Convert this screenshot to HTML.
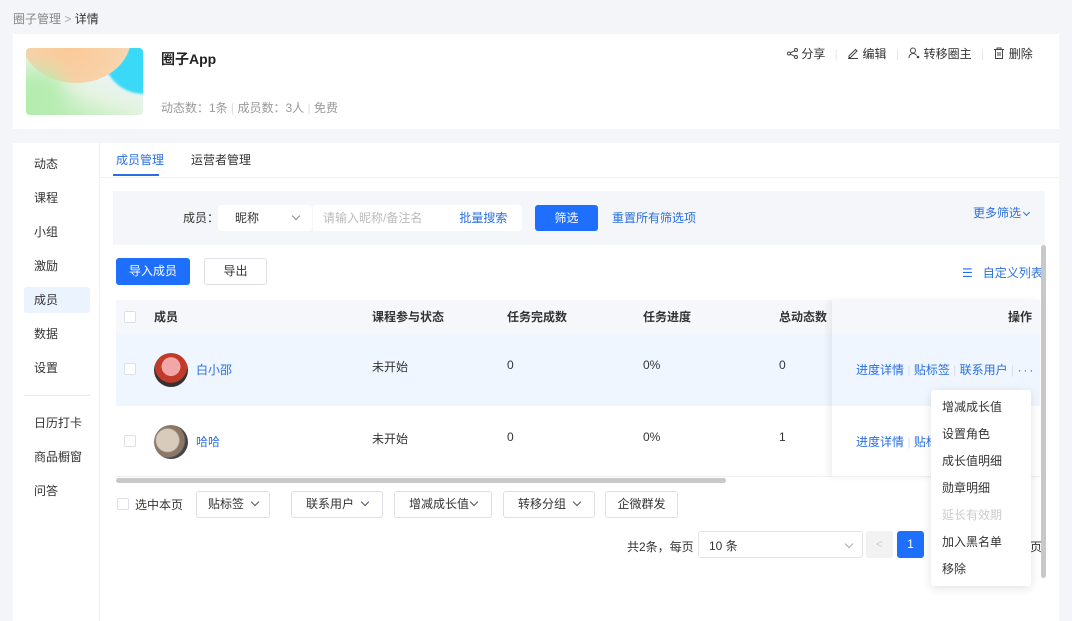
<!DOCTYPE html>
<html><head><meta charset="utf-8"><style>
*{box-sizing:border-box;margin:0;padding:0}
body{width:1072px;height:621px;overflow:hidden;background:#f4f5f8;font-family:"Liberation Sans","Noto Sans CJK SC",sans-serif;font-size:12px;color:#333;position:relative}
.a{position:absolute;white-space:nowrap}
.blue{color:#2a6fe0}
.btn{position:absolute;border:1px solid #dcdfe6;border-radius:3px;background:#fff;text-align:center;line-height:25px;font-size:12px;color:#333}
.cb{position:absolute;width:12px;height:12px;border:1px solid #dcdfe6;border-radius:2px;background:#fff}
.chev{display:inline-block;width:6px;height:6px;border-right:1.3px solid #555;border-bottom:1.3px solid #555;transform:rotate(45deg);margin-left:8px;position:relative;top:-3px}
.menu{position:absolute;left:34px;font-size:12px;color:#333}
</style></head><body>
<div class="a" style="left:13px;top:10px;color:#888">圈子管理 <span style="color:#aaa">&gt;</span> <span style="color:#333">详情</span></div>

<div class="a" style="left:13px;top:34px;width:1046px;height:95px;background:#fff"></div>
<div class="a" style="left:26px;top:48px;width:117px;height:67px;border-radius:4px;overflow:hidden;background:linear-gradient(200deg,#eaf1fb 0%,#eef3fb 30%,#e3f3df 60%,#a8eaa5 100%)">
 <div style="position:absolute;left:78px;top:-30px;width:80px;height:76px;border-radius:50%;background:#3ad9f7;filter:blur(1px)"></div>
 <div style="position:absolute;left:-5px;top:-55px;width:110px;height:90px;border-radius:50%;background:radial-gradient(circle at 45% 55%,#fbc996 0%,#f8d2aa 60%,#f3e2c8 100%)"></div>
 <div style="position:absolute;left:-20px;top:20px;width:60px;height:60px;border-radius:50%;background:#b5ecaf;filter:blur(10px)"></div>
</div>
<div class="a" style="left:161px;top:49px;font-size:14px;font-weight:bold;color:#222">圈子App</div>
<div class="a" style="left:161px;top:99px;color:#999">动态数：1条 <span style="color:#ddd">|</span> 成员数：3人 <span style="color:#ddd">|</span> 免费</div>
<div class="a" style="left:787px;top:45px;color:#333">
<svg width="11" height="11" viewBox="0 0 11 11" style="vertical-align:-1px"><circle cx="2" cy="5.5" r="1.5" fill="none" stroke="#444"/><circle cx="9" cy="2" r="1.5" fill="none" stroke="#444"/><circle cx="9" cy="9" r="1.5" fill="none" stroke="#444"/><path d="M3.3 4.8L7.7 2.7M3.3 6.2L7.7 8.3" stroke="#444"/></svg> 分享
<span style="color:#e5e5e5;margin:0 6px">|</span>
<svg width="12" height="12" viewBox="0 0 12 12" style="vertical-align:-1px"><path d="M2 9L8.5 2.5l1.5 1.5L3.5 10.5H2z M1 11.5h10" fill="none" stroke="#444"/></svg> 编辑
<span style="color:#e5e5e5;margin:0 6px">|</span>
<svg width="12" height="12" viewBox="0 0 12 12" style="vertical-align:-1px"><circle cx="5" cy="3.5" r="2.5" fill="none" stroke="#444"/><path d="M1 11c0-3 2-4.5 4-4.5s3 1 3.5 2" fill="none" stroke="#444"/><circle cx="10" cy="10" r="1.3" fill="#444"/></svg> 转移圈主
<span style="color:#e5e5e5;margin:0 6px">|</span>
<svg width="12" height="12" viewBox="0 0 12 12" style="vertical-align:-1px"><path d="M1 2.5h10M4 2.5V1h4v1.5M2.5 2.5v9h7v-9M5 5v4M7 5v4" fill="none" stroke="#444"/></svg> 删除
</div>

<div class="a" style="left:13px;top:143px;width:1046px;height:478px;background:#fff"></div>
<div class="a" style="left:99px;top:143px;width:1px;height:478px;background:#eef0f3"></div>
<div class="a" style="left:24px;top:287px;width:66px;height:26px;background:#ebf3ff;border-radius:3px"></div>
<div class="menu" style="top:155px">动态</div>
<div class="menu" style="top:189px">课程</div>
<div class="menu" style="top:223px">小组</div>
<div class="menu" style="top:257px">激励</div>
<div class="menu" style="top:291px">成员</div>
<div class="menu" style="top:325px">数据</div>
<div class="menu" style="top:359px">设置</div>
<div class="a" style="left:24px;top:395px;width:66px;height:1px;background:#e8e8e8"></div>
<div class="menu" style="top:414px">日历打卡</div>
<div class="menu" style="top:448px">商品橱窗</div>
<div class="menu" style="top:482px">问答</div>

<div class="a" style="left:116px;top:151px"><span class="blue">成员管理</span></div>
<div class="a" style="left:191px;top:151px">运营者管理</div>
<div class="a" style="left:113px;top:174px;width:46px;height:2px;background:#2a6fe0"></div>
<div class="a" style="left:100px;top:177px;width:959px;height:1px;background:#f0f0f0"></div>

<div class="a" style="left:113px;top:191px;width:932px;height:54px;background:#f4f6f9"></div>
<div class="a" style="left:183px;top:209px">成员：</div>
<div class="a" style="left:218px;top:205px;width:94px;height:26px;background:#fff;border-radius:3px;padding:4px 0 0 17px">昵称<span class="chev" style="margin-left:34px;border-color:#888"></span></div>
<div class="a" style="left:313px;top:205px;width:209px;height:26px;background:#fff;border-radius:3px;padding:4px 0 0 10px;color:#bbb">请输入昵称/备注名<span class="blue" style="margin-left:37px">批量搜索</span></div>
<div class="a" style="left:535px;top:205px;width:63px;height:26px;background:#1f6fff;border-radius:3px;color:#fff;text-align:center;line-height:26px">筛选</div>
<div class="a blue" style="left:612px;top:209px">重置所有筛选项</div>
<div class="a blue" style="left:973px;top:204px">更多筛选<span class="chev" style="margin-left:3px;width:5px;height:5px;border-color:#2a6fe0;top:-2px"></span></div>

<div class="a" style="left:116px;top:258px;width:74px;height:27px;background:#1f6fff;border-radius:3px;color:#fff;text-align:center;line-height:27px">导入成员</div>
<div class="btn" style="left:204px;top:258px;width:63px;height:27px">导出</div>
<div class="a blue" style="left:962px;top:264px">☰&nbsp;&nbsp; 自定义列表</div>

<div class="a" style="left:116px;top:300px;width:924px;height:33px;background:#f5f7fa"></div>
<div class="a" style="left:116px;top:333px;width:924px;height:73px;background:#f0f6ff"></div>
<div class="a" style="left:116px;top:476px;width:924px;height:1px;background:#f0f0f0"></div>
<div class="cb" style="left:124px;top:311px"></div>
<div class="cb" style="left:124px;top:363px"></div>
<div class="cb" style="left:124px;top:435px"></div>
<div class="a" style="left:154px;top:308px;font-weight:bold">成员</div>
<div class="a" style="left:372px;top:308px;font-weight:bold">课程参与状态</div>
<div class="a" style="left:507px;top:308px;font-weight:bold">任务完成数</div>
<div class="a" style="left:643px;top:308px;font-weight:bold">任务进度</div>
<div class="a" style="left:779px;top:308px;font-weight:bold">总动态数</div>
<div class="a" style="left:154px;top:353px;width:34px;height:34px;border-radius:50%;background:radial-gradient(circle at 50% 40%,#f2a6a8 0 35%,#c23a2a 36% 60%,#333 62%)"></div>
<div class="a" style="left:154px;top:425px;width:34px;height:34px;border-radius:50%;background:radial-gradient(circle at 40% 45%,#d8cbbb 0 40%,#8a7767 45% 60%,#444 65%)"></div>
<div class="a blue" style="left:196px;top:361px">白小邵</div>
<div class="a blue" style="left:196px;top:433px">哈哈</div>
<div class="a" style="left:372px;top:358px">未开始</div>
<div class="a" style="left:372px;top:430px">未开始</div>
<div class="a" style="left:507px;top:358px">0</div><div class="a" style="left:507px;top:430px">0</div>
<div class="a" style="left:643px;top:358px">0%</div><div class="a" style="left:643px;top:430px">0%</div>
<div class="a" style="left:779px;top:358px">0</div><div class="a" style="left:779px;top:430px">1</div>

<div class="a" style="left:832px;top:300px;width:208px;height:177px;box-shadow:-4px 0 6px rgba(0,0,0,0.06)"></div>
<div class="a" style="left:832px;top:300px;width:208px;height:33px;background:#f5f7fa"></div>
<div class="a" style="left:832px;top:333px;width:208px;height:73px;background:#f0f6ff"></div>
<div class="a" style="left:832px;top:406px;width:208px;height:70px;background:#fff"></div>
<div class="a" style="left:1008px;top:308px;font-weight:bold">操作</div>
<div class="a blue" style="left:856px;top:361px">进度详情<span style="color:#ddd"> | </span>贴标签<span style="color:#ddd"> | </span>联系用户<span style="color:#ddd"> | </span><span style="letter-spacing:2px">···</span></div>
<div class="a blue" style="left:856px;top:433px">进度详情<span style="color:#ddd"> | </span>贴标</div>

<div class="a" style="left:116px;top:478px;width:610px;height:5px;background:#c8c8c8;border-radius:3px"></div>
<div class="a" style="left:1041px;top:245px;width:5px;height:333px;background:#c8c8c8;border-radius:3px"></div>

<div class="cb" style="left:117px;top:498px"></div>
<div class="a" style="left:135px;top:496px">选中本页</div>
<div class="btn" style="left:196px;top:491px;width:74px;height:27px">贴标签<span class="chev"></span></div>
<div class="btn" style="left:291px;top:491px;width:92px;height:27px">联系用户<span class="chev"></span></div>
<div class="btn" style="left:394px;top:491px;width:98px;height:27px">增减成长值<span class="chev" style="margin-left:2px"></span></div>
<div class="btn" style="left:503px;top:491px;width:92px;height:27px">转移分组<span class="chev"></span></div>
<div class="btn" style="left:605px;top:491px;width:73px;height:27px">企微群发</div>

<div class="a" style="left:627px;top:538px">共2条，每页</div>
<div class="a" style="left:698px;top:531px;width:165px;height:27px;border:1px solid #e4e4e4;border-radius:3px;padding:5px 0 0 10px">10 条<span class="chev" style="margin-left:108px;border-color:#aaa"></span></div>
<div class="a" style="left:866px;top:531px;width:27px;height:27px;background:#f2f2f2;border-radius:3px;color:#ccc;text-align:center;line-height:27px">&lt;</div>
<div class="a" style="left:897px;top:531px;width:27px;height:27px;background:#1f6fff;border-radius:3px;color:#fff;text-align:center;line-height:27px">1</div>
<div class="a" style="left:1030px;top:538px">页</div>

<div class="a" style="left:931px;top:390px;width:100px;height:196px;background:#fff;border-radius:3px;box-shadow:0 2px 10px rgba(0,0,0,0.12)"></div>
<div class="a" style="left:942px;top:398px">增减成长值</div>
<div class="a" style="left:942px;top:425px">设置角色</div>
<div class="a" style="left:942px;top:452px">成长值明细</div>
<div class="a" style="left:942px;top:479px">勋章明细</div>
<div class="a" style="left:942px;top:506px;color:#ccc">延长有效期</div>
<div class="a" style="left:942px;top:533px">加入黑名单</div>
<div class="a" style="left:942px;top:560px">移除</div>
</body></html>
